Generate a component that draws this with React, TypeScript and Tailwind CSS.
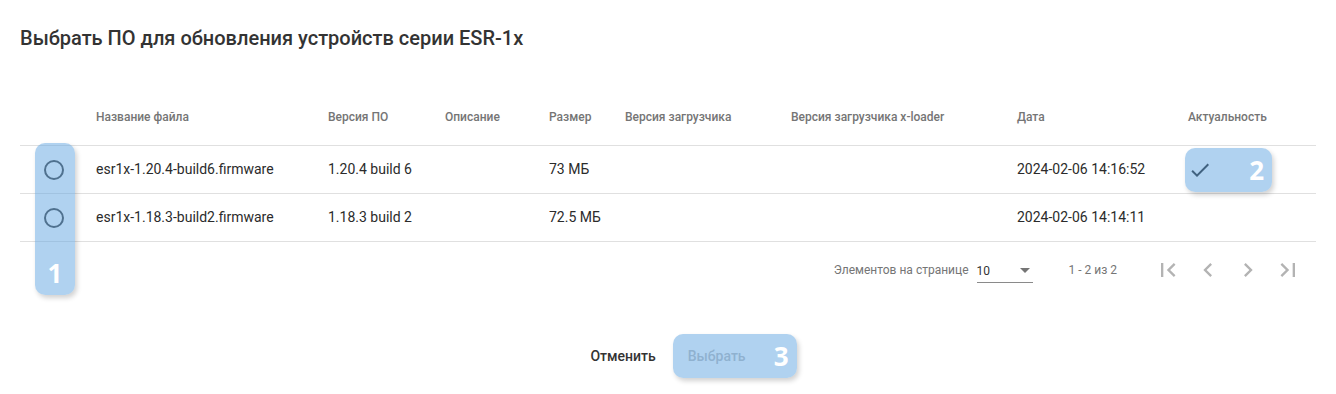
import React from 'react';

type FirmwareRow = {
  file: string;
  version: string;
  description: string;
  size: string;
  loader: string;
  xLoader: string;
  date: string;
  actual: boolean;
};

const rows: FirmwareRow[] = [
  {
    file: 'esr1x-1.20.4-build6.firmware',
    version: '1.20.4 build 6',
    description: '',
    size: '73 МБ',
    loader: '',
    xLoader: '',
    date: '2024-02-06 14:16:52',
    actual: true,
  },
  {
    file: 'esr1x-1.18.3-build2.firmware',
    version: '1.18.3 build 2',
    description: '',
    size: '72.5 МБ',
    loader: '',
    xLoader: '',
    date: '2024-02-06 14:14:11',
    actual: false,
  },
];

const columns = [
  '',
  'Название файла',
  'Версия ПО',
  'Описание',
  'Размер',
  'Версия загрузчика',
  'Версия загрузчика x-loader',
  'Дата',
  'Актуальность',
];

const gridCols = 'grid grid-cols-[76px_232px_117px_104px_76px_166px_226px_171px_128px]';

function Marker({ n }: { n: number }) {
  return (
    <span className="font-['Open_Sans',sans-serif] text-[26px] font-bold leading-none text-white">{n}</span>
  );
}

function PagerIcon({ d }: { d: string }) {
  return (
    <button className="flex h-10 w-10 items-center justify-center" disabled>
      <svg width="28" height="28" viewBox="0 0 24 24" className="fill-[#b3b3b3]">
        <path d={d} />
      </svg>
    </button>
  );
}

export default function App() {
  return (
    <div className="h-[394px] w-[1336px] bg-white px-5 font-['Roboto',sans-serif] text-[#2b2b2b]">
      <h2 className="pt-[22px] text-[20px] font-medium leading-8 text-[#333]">
        Выбрать ПО для обновления устройств серии ESR-1x
      </h2>

      <div className="relative mt-[35px]">
        <div className={`${gridCols} h-[57px] items-center border-b border-[#e0e0e0] text-[12px] font-medium text-[#757575]`}>
          {columns.map((c, i) => (
            <div key={i}>{c}</div>
          ))}
        </div>

        {rows.map((r) => (
          <div key={r.file} className={`${gridCols} h-[48px] items-center border-b border-[#e0e0e0] text-[14px]`}>
            <div className="pl-6">
              <div className="h-5 w-5 rounded-full border-2 border-[#3c3c3c]" />
            </div>
            <div>{r.file}</div>
            <div>{r.version}</div>
            <div>{r.description}</div>
            <div>{r.size}</div>
            <div>{r.loader}</div>
            <div>{r.xLoader}</div>
            <div>{r.date}</div>
            <div>
              {r.actual && (
                <svg width="24" height="24" viewBox="0 0 24 24" className="fill-[#1f1f1f]">
                  <path d="M9 16.2L4.8 12l-1.4 1.4L9 19 21 7l-1.4-1.4L9 16.2z" />
                </svg>
              )}
            </div>
          </div>
        ))}

        <div className="flex h-[56px] items-center justify-end pr-2 text-[12px] text-[#757575]">
          <span>Элементов на странице</span>
          <div className="ml-2 flex h-[25px] w-[56px] items-center justify-between border-b border-[#8a8a8a] pt-[2px] text-[#333]">
            <span>10</span>
            <span className="mr-[3px] h-0 w-0 border-x-[5px] border-t-[5px] border-x-transparent border-t-[#757575]" />
          </div>
          <span className="ml-[36px] mr-[31px]">1 - 2 из 2</span>
          <PagerIcon d="M18.41 16.59L13.82 12l4.59-4.59L17 6l-6 6 6 6zM6 6h2v12H6z" />
          <PagerIcon d="M15.41 7.41L14 6l-6 6 6 6 1.41-1.41L10.83 12z" />
          <PagerIcon d="M10 6L8.59 7.41 13.17 12l-4.58 4.59L10 18l6-6z" />
          <PagerIcon d="M5.59 7.41L10.18 12l-4.59 4.59L7 18l6-6-6-6zM16 6h2v12h-2z" />
        </div>

        {/* annotation overlays */}
        <div className="absolute left-[15px] top-[54px] flex h-[152px] w-[40px] items-end justify-center rounded-[10px] bg-[rgba(97,165,225,0.5)] pb-[9px] shadow-[2px_3px_5px_rgba(0,0,0,0.18)]">
          <Marker n={1} />
        </div>
        <div className="absolute left-[1165px] top-[59px] flex h-[44px] w-[87px] items-center justify-end rounded-[10px] bg-[rgba(97,165,225,0.5)] pr-[8px] shadow-[2px_3px_5px_rgba(0,0,0,0.18)]">
          <Marker n={2} />
        </div>
      </div>

      <div className="mt-10 flex justify-center">
        <button className="h-9 px-4 text-[14px] font-medium text-[#333]">Отменить</button>
        <div className="relative">
          <button className="h-9 px-4 text-[14px] font-medium text-[#bdbdbd]" disabled>
            Выбрать
          </button>
          <div className="absolute left-[1px] top-[-4px] flex h-[44px] w-[124px] items-center justify-end rounded-[10px] bg-[rgba(97,165,225,0.5)] pr-[8px] shadow-[2px_3px_5px_rgba(0,0,0,0.18)]">
            <Marker n={3} />
          </div>
        </div>
      </div>
    </div>
  );
}
